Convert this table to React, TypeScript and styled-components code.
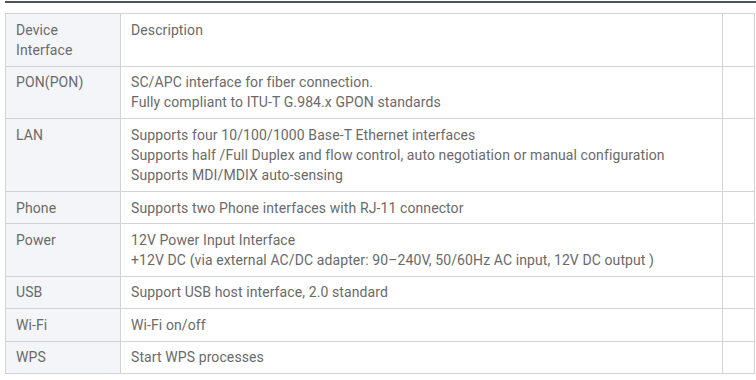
import React from "react";
import styled, { createGlobalStyle } from "styled-components";

const GlobalStyle = createGlobalStyle`
  html, body {
    margin: 0;
    padding: 0;
    background: #ffffff;
  }

  body {
    font-family: Roboto, "Liberation Sans", Arial, sans-serif;
  }
`;

const Page = styled.div`
  width: 756px;
  height: 380px;
  overflow: hidden;

  padding-top: 1px;
  box-sizing: border-box;
`;

const TopRule = styled.div`
  height: 2px;
  margin-left: 5px;

  background-color: #4d515b;
`;

const Spec = styled.table`
  width: 749px;
  margin-top: 10px;
  margin-left: 5px;

  border-collapse: collapse;
  table-layout: fixed;

  color: #6a6a6a;
  font-size: 14px;
  letter-spacing: 0.1px;
  line-height: 20.3px;
`;

const Cell = styled.td<{ $label?: boolean }>`
  padding: 5.5px 10px 5.5px 10px;
  vertical-align: top;

  border: 1px solid #d3d3d3;
  background-color: ${(p) => (p.$label ? "#f4f5f9" : "#ffffff")};
`;

const Line = styled.div`
  white-space: nowrap;
`;

type Row = { name: string[]; desc: string[] };

const rows: Row[] = [
  { name: ["Device", "Interface"], desc: ["Description"] },
  {
    name: ["PON(PON)"],
    desc: [
      "SC/APC interface for fiber connection.",
      "Fully compliant to ITU-T G.984.x GPON standards",
    ],
  },
  {
    name: ["LAN"],
    desc: [
      "Supports four 10/100/1000 Base-T Ethernet interfaces",
      "Supports half /Full Duplex and flow control, auto negotiation or manual configuration",
      "Supports MDI/MDIX auto-sensing",
    ],
  },
  { name: ["Phone"], desc: ["Supports two Phone interfaces with RJ-11 connector"] },
  {
    name: ["Power"],
    desc: [
      "12V Power Input Interface",
      "+12V DC (via external AC/DC adapter: 90\u2013240V, 50/60Hz AC input, 12V DC output )",
    ],
  },
  { name: ["USB"], desc: ["Support USB host interface, 2.0 standard"] },
  { name: ["Wi-Fi"], desc: ["Wi-Fi on/off"] },
  { name: ["WPS"], desc: ["Start WPS processes"] },
];

const App = () => {
  return (
    <Page>
      <GlobalStyle />
      <TopRule />
      <Spec>
        <colgroup>
          <col style={{ width: 115 }} />
          <col style={{ width: 602 }} />
          <col style={{ width: 32 }} />
        </colgroup>
        <tbody>
          {rows.map((row) => (
            <tr key={row.name.join(" ")}>
              <Cell $label>
                {row.name.map((l) => (
                  <Line key={l}>{l}</Line>
                ))}
              </Cell>
              <Cell>
                {row.desc.map((l) => (
                  <Line key={l}>{l}</Line>
                ))}
              </Cell>
              <Cell />
            </tr>
          ))}
        </tbody>
      </Spec>
    </Page>
  );
};

export default App;
